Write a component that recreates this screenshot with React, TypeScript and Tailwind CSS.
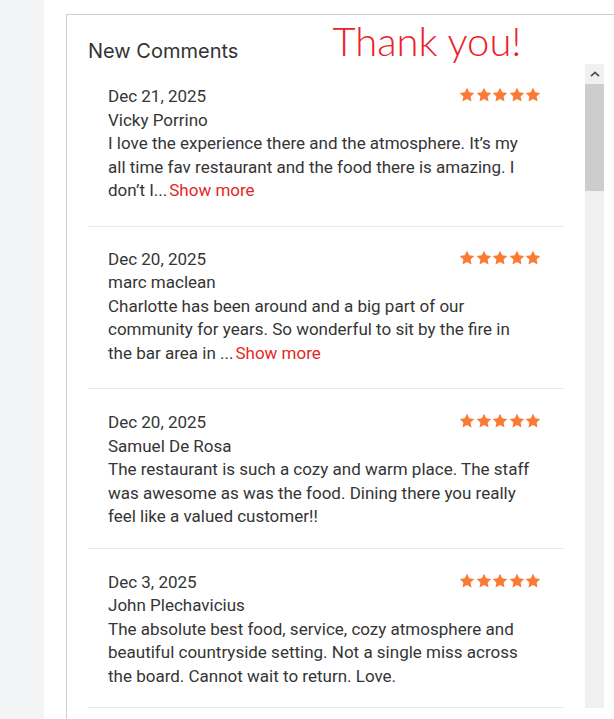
type Review = {
  date: string;
  name: string;
  text: string;
  truncated?: boolean;
};

const reviews: Review[] = [
  {
    date: "Dec 21, 2025",
    name: "Vicky Porrino",
    text: "I love the experience there and the atmosphere. It’s my all time fav restaurant and the food there is amazing. I don’t I...",
    truncated: true,
  },
  {
    date: "Dec 20, 2025",
    name: "marc maclean",
    text: "Charlotte has been around and a big part of our community for years. So wonderful to sit by the fire in the bar area in ...",
    truncated: true,
  },
  {
    date: "Dec 20, 2025",
    name: "Samuel De Rosa",
    text: "The restaurant is such a cozy and warm place. The staff was awesome as was the food. Dining there you really feel like a valued customer!!",
  },
  {
    date: "Dec 3, 2025",
    name: "John Plechavicius",
    text: "The absolute best food, service, cozy atmosphere and beautiful countryside setting. Not a single miss across the board. Cannot wait to return. Love.",
  },
];

function Star() {
  return (
    <svg viewBox="0 0 24 24" className="h-[16px] w-[16px]" fill="#fb7a35">
      <path d="M12 1l3.3 6.9 7.6 1-5.5 5.2 1.4 7.5L12 17.9l-6.8 3.7 1.4-7.5L1.1 8.9l7.6-1z" />
    </svg>
  );
}

function Stars() {
  return (
    <div className="flex gap-[0.5px] pr-[3px] pt-[2px]">
      {[0, 1, 2, 3, 4].map((i) => (
        <Star key={i} />
      ))}
    </div>
  );
}

function ReviewItem({ review }: { review: Review }) {
  return (
    <div
      className={
        review.truncated
          ? "border-b border-[#e8e8e8] px-[20px] pb-[23px] pt-[21px]"
          : "border-b border-[#e8e8e8] px-[20px] pb-[19px] pt-[22px]"
      }
    >
      <div className="flex items-start justify-between">
        <span>{review.date}</span>
        <Stars />
      </div>
      <div>{review.name}</div>
      <p className="pr-[11px]">
        {review.text}
        {review.truncated ? <span className="pl-[2px] text-[#e5271d]">Show more</span> : null}
      </p>
    </div>
  );
}

function Scrollbar() {
  return (
    <div className="flex w-[19px] shrink-0 flex-col bg-[#f0f0f0]">
      <div className="flex h-[20px] items-center justify-center">
        <svg viewBox="0 0 10 6" className="h-[6px] w-[10px]">
          <path d="M1 5.2L5 1.4l4 3.8" fill="none" stroke="#505050" strokeWidth="1.8" />
        </svg>
      </div>
      <div className="h-[107px] bg-[#cdcdcd]" />
    </div>
  );
}

export default function App() {
  return (
    <div className="flex h-[719px] overflow-hidden bg-white">
      <div className="w-[44px] shrink-0 bg-[#f3f4f6]" />
      <div className="flex-1 pl-[22px] pt-[14px]">
        <div className="h-[800px] w-[600px] border-l border-t border-[#cfcfcf]">
          <div className="flex h-[49px] items-start gap-[94px] pl-[21px]">
            <h2
              className="mt-[22px] text-[20px] leading-[28px] text-[#333]"
              style={{ fontFamily: "Inter, 'Noto Sans', sans-serif" }}
            >
              New Comments
            </h2>
            <span
              className="mt-[6px] text-[40px] font-light leading-none text-[#ec2229]"
              style={{ fontFamily: "Lato, 'Noto Sans', sans-serif" }}
            >
              Thank you!
            </span>
          </div>
          <div className="flex pl-[21px]">
            <div
              className="w-[476px] text-[17px] leading-[23.5px] text-[#353535]"
              style={{ fontFamily: "Roboto, 'Liberation Sans', sans-serif" }}
            >
              {reviews.map((r, i) => (
                <ReviewItem key={i} review={r} />
              ))}
            </div>
            <div className="w-[21px] shrink-0" />
            <Scrollbar />
          </div>
        </div>
      </div>
    </div>
  );
}
